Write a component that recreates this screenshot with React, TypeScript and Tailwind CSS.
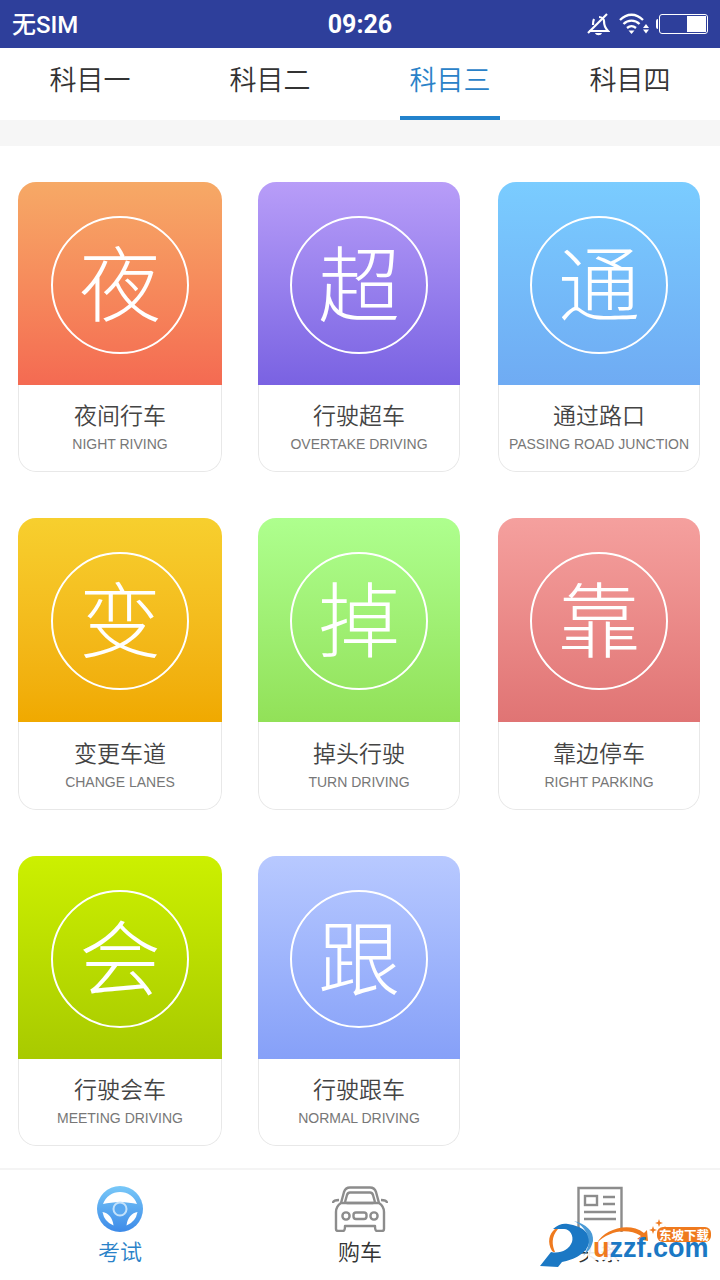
const cjk = '"Noto Sans CJK SC", "Noto Sans", sans-serif';

const tabs = [
  { label: '科目一', active: false },
  { label: '科目二', active: false },
  { label: '科目三', active: true },
  { label: '科目四', active: false },
];

const cards = [
  { glyph: '夜', title: '夜间行车', en: 'NIGHT RIVING', bg: 'from-[#f6a966] to-[#f46a52]' },
  { glyph: '超', title: '行驶超车', en: 'OVERTAKE DRIVING', bg: 'from-[#b89df8] to-[#7a62e2]' },
  { glyph: '通', title: '通过路口', en: 'PASSING ROAD JUNCTION', bg: 'from-[#7accff] to-[#6fabf3]' },
  { glyph: '变', title: '变更车道', en: 'CHANGE LANES', bg: 'from-[#f7cf2e] to-[#f0a900]' },
  { glyph: '掉', title: '掉头行驶', en: 'TURN DRIVING', bg: 'from-[#aeff8e] to-[#92e158]' },
  { glyph: '靠', title: '靠边停车', en: 'RIGHT PARKING', bg: 'from-[#f5a09e] to-[#e07474]' },
  { glyph: '会', title: '行驶会车', en: 'MEETING DRIVING', bg: 'from-[#ccf000] to-[#a8ca00]' },
  { glyph: '跟', title: '行驶跟车', en: 'NORMAL DRIVING', bg: 'from-[#b8c9ff] to-[#86a0f8]' },
];

function BellOff() {
  return (
    <svg width="24" height="24" viewBox="0 0 24 24" fill="none" stroke="white" strokeWidth="2.2">
      <path d="M3 19 L22 19 C19 16 18 13 18 9 C18 7 16 5 13 5" />
      <path d="M8 7 C7 9 7 11 7 13" />
      <path d="M2 21 L21 2" />
      <path d="M9 21 L16 21 C15 24 10 24 9 21 Z" fill="white" stroke="none" />
    </svg>
  );
}

function WifiArrows() {
  return (
    <svg width="31" height="22" viewBox="0 0 31 22" fill="none" stroke="white" strokeWidth="2.3">
      <path d="M1 7 C8 0 17 0 24 7" />
      <path d="M4.5 11 C9 6.5 16 6.5 20.5 11" />
      <path d="M8 15 C11 12.5 14 12.5 17 15" />
      <path d="M9.5 17.5 L15.5 17.5 L12.5 21 Z" fill="white" stroke="none" />
      <path d="M27 11 L30 15 L24 15 Z M24 16.5 L30 16.5 L27 20.5 Z" fill="white" stroke="none" />
    </svg>
  );
}

function StatusBar() {
  return (
    <div className="h-12 bg-[#2e3f9b] flex items-center justify-between pl-3 pr-3 pt-[2px] text-white">
      <span className="text-[24px] font-medium w-[200px]" style={{ fontFamily: 'Roboto, "Noto Sans CJK SC", sans-serif' }}>无SIM</span>
      <span className="text-[25px] font-bold" style={{ fontFamily: 'Roboto, sans-serif' }}>09:26</span>
      <div className="w-[200px] flex items-center justify-end -mt-[2px]">
        <BellOff />
        <div className="w-[9px]" />
        <WifiArrows />
        <div className="w-[6px]" />
        <div className="w-[2px] h-[10px] rounded-l-full bg-white mr-[1px]" />
        <div className="w-[49px] h-[20px] rounded-[3px] border border-white flex justify-end p-[1px]">
          <div className="w-[19px] h-full bg-white" />
        </div>
      </div>
    </div>
  );
}

function Tabs() {
  return (
    <div className="h-[72px] bg-white grid grid-cols-4">
      {tabs.map((t) => (
        <div key={t.label} className="flex justify-center">
          <div className={`w-[100px] flex justify-center pt-[11px] text-[27px] font-[350] ${t.active ? 'text-[#2a82c8] border-b-4 border-[#2282cc]' : 'text-[#333333]'}`}>
            {t.label}
          </div>
        </div>
      ))}
    </div>
  );
}

function Card({ glyph, title, en, bg, first, tall }: { glyph: string; title: string; en: string; bg: string; first: boolean; tall: boolean }) {
  return (
    <div className={`ml-[18px] rounded-[18px] overflow-hidden bg-white flex flex-col ${first ? 'mr-[18px]' : 'mr-[20px]'} ${tall ? 'h-[292px]' : 'h-[290px]'}`}>
      <div className={`shrink-0 pt-[2px] bg-gradient-to-b ${bg} flex items-center justify-center ${tall ? 'h-[204px]' : 'h-[203px]'}`}>
        <div className="w-[138px] h-[138px] rounded-full border-2 border-white flex items-center justify-center pb-[10px] text-white text-[82px] font-light leading-none">
          {glyph}
        </div>
      </div>
      <div className="flex-1 flex flex-col items-center border-x border-b border-[#e8e8e8] rounded-b-[18px]">
        <div className={`text-[23px] leading-[30px] font-[350] text-[#444444] ${tall ? 'mt-[15px]' : 'mt-[14px]'}`}>{title}</div>
        <div className="text-[14px] leading-[18px] mt-[6px] text-[#777777] whitespace-nowrap" style={{ fontFamily: '"Liberation Sans", sans-serif' }}>{en}</div>
      </div>
    </div>
  );
}

function SteeringWheel() {
  return (
    <svg width="46" height="46" viewBox="0 0 46 46">
      <defs>
        <linearGradient id="wheel" x1="0" y1="0" x2="0" y2="1">
          <stop offset="0" stopColor="#78c8f8" />
          <stop offset="1" stopColor="#3d8ae8" />
        </linearGradient>
      </defs>
      <circle cx="23" cy="23" r="23" fill="url(#wheel)" />
      <path d="M6 18 A18 18 0 0 1 40 18 C30 15.5 16 15.5 6 18 Z" fill="white" />
      <path d="M5.5 26 C11 27 15.5 31 16.5 39.5 A18 18 0 0 1 5.5 26 Z" fill="white" />
      <path d="M40.5 26 C35 27 30.5 31 29.5 39.5 A18 18 0 0 0 40.5 26 Z" fill="white" />
      <circle cx="23" cy="23" r="6.5" fill="#5aa8f0" stroke="#c4e2fa" strokeWidth="2" />
    </svg>
  );
}

function CarIcon() {
  return (
    <svg width="56" height="46" viewBox="0 0 56 46" fill="none" stroke="#8c8c8c" strokeWidth="2.4" strokeLinejoin="round">
      <path d="M9 17 L12 6 C13 3 15 1.5 18 1.5 L38 1.5 C41 1.5 43 3 44 6 L47 17" />
      <path d="M15 17 C13.5 17 13 16 13.3 15 L15 9 C15.5 7.5 16.5 6.5 18 6.5 L38 6.5 C39.5 6.5 40.5 7.5 41 9 L42.7 15 C43 16 42.5 17 41 17 Z" />
      <path d="M9 17 L47 17 C50 19 52 22 52 26 L52 43 C52 44.5 51 45 50 45 L45 45 C44 45 43 44 43 40 L13 40 C13 44 12 45 11 45 L6 45 C5 45 4 44.5 4 43 L4 26 C4 22 6 19 9 17 Z" />
      <path d="M1 17 C1 15 3 14 7 14 M55 17 C55 15 53 14 49 14" />
      <circle cx="14" cy="30" r="3.6" />
      <circle cx="42" cy="30" r="3.6" />
      <rect x="21.5" y="26.5" width="13" height="6.5" rx="2.5" />
    </svg>
  );
}

function NewsIcon() {
  return (
    <svg width="46" height="46" viewBox="0 0 46 46" fill="none" stroke="#8c8c8c" strokeWidth="2.4">
      <path d="M1.5 46 L1.5 2 L44.5 2 L44.5 46" />
      <rect x="8" y="10" width="12" height="9" />
      <path d="M26 11 L38 11 M26 18 L38 18 M7 26 L39 26 M7 33 L39 33" />
    </svg>
  );
}

function Watermark() {
  return (
    <div className="absolute left-[536px] top-[1216px] w-[180px] h-[56px]">
      <div className="absolute left-[52px] top-[20px] w-[124px] h-[24px] bg-white/90" />
      <svg className="absolute left-0 top-0" width="180" height="56" viewBox="0 0 180 56">
        <path d="M17 13 C22 8 28 7 32 8 C46 10 55 17 53 27 C51 37 38 44 26 46 L22 51 L4 50 L15 36 C24 38 33 34 36 26 C38 20 34 13 28 13 C24 13 20 13 17 13 Z" fill="#1b78c4" />
        <path d="M38 5 C50 8 58 15 57 25 C55 34 50 37 47 40 C52 33 54 27 52 21 C50 14 46 9 38 5 Z" fill="#4a9ad6" />
        <path d="M19 13 C13 18 11 26 16 35 C17 36 18 36 19 36 C16 29 15 21 22 13 Z" fill="#ef7a1e" />
        <path d="M61 27 C68 14 92 5 108 17 L111 14 L112 25 L101 23 L105 20 C90 11 72 16 61 27 Z" fill="#ef7a1e" />
        <path d="M117 10 l1 3 l3 1 l-3 1 l-1 3 l-1 -3 l-3 -1 l3 -1 Z M123 3 l1 3 l3 1 l-3 1 l-1 3 l-1 -3 l-3 -1 l3 -1 Z M129 10 l1 2 l2 1 l-2 1 l-1 2 l-1 -2 l-2 -1 l2 -1 Z" fill="#ef7a1e" />
      </svg>
      <span className="absolute left-[121px] top-[11px] w-[54px] h-[15px] rounded-[6px] bg-[#ef7a1e] text-white text-[12.5px] leading-[15px] text-center font-bold whitespace-nowrap">东坡下载</span>
      <span className="absolute left-[57px] top-[21px] text-[27px] leading-[22px] font-bold whitespace-nowrap" style={{ fontFamily: '"Liberation Sans", sans-serif' }}>
        <span className="text-[#ef7a1e]">u</span><span className="text-[#1b78c4]">zzf.com</span>
      </span>
    </div>
  );
}

function BottomNav() {
  return (
    <div className="h-[112px] border-t-2 border-[#f4f4f4] bg-white grid grid-cols-3">
      <div className="flex flex-col items-center pt-[16px]">
        <SteeringWheel />
        <span className="text-[22px] leading-[28px] mt-[4px] font-[350] text-[#2a82c8]">考试</span>
      </div>
      <div className="flex flex-col items-center pt-[16px]">
        <CarIcon />
        <span className="text-[22px] leading-[28px] mt-[4px] font-[350] text-[#333333]">购车</span>
      </div>
      <div className="flex flex-col items-center pt-[16px]">
        <NewsIcon />
        <span className="text-[22px] leading-[28px] mt-[4px] font-[350] text-[#333333]">头条</span>
      </div>
    </div>
  );
}

export default function App() {
  return (
    <div className="relative w-[720px] h-[1280px] bg-white flex flex-col overflow-hidden" style={{ fontFamily: cjk }}>
      <StatusBar />
      <Tabs />
      <div className="h-[26px] bg-[#f6f6f6]" />
      <div className="flex-1 grid grid-cols-3 content-start gap-y-[46px] pt-9">
        {cards.map((c, i) => (
          <Card key={c.glyph} {...c} first={i % 3 === 0} tall={i >= 3 && i < 6} />
        ))}
      </div>
      <BottomNav />
      <Watermark />
    </div>
  );
}
